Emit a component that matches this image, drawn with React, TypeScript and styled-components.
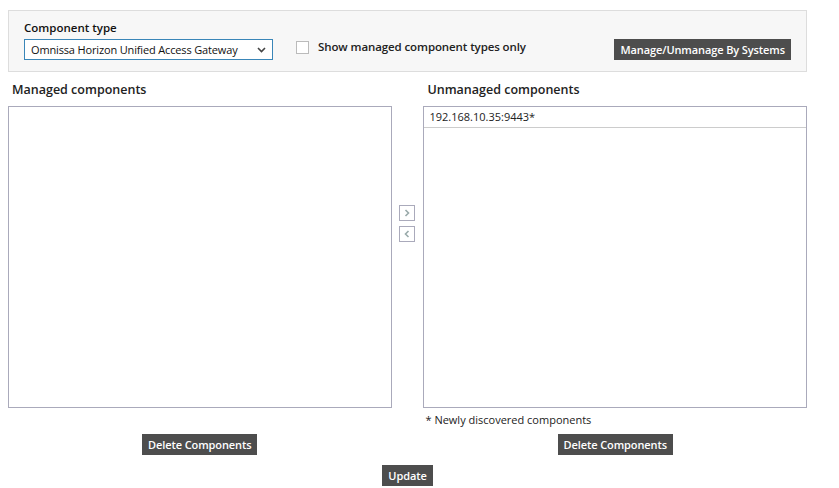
import React from "react";
import styled, { createGlobalStyle } from "styled-components";

const G = createGlobalStyle`
  body { margin: 0; font-family: "Open Sans", "DejaVu Sans", sans-serif; font-size: 12px; color: #222; background: #fff; }
`;
const Page = styled.div`width: 839px; padding: 10px 32px 0 8px; box-sizing: border-box;`;
const TopPanel = styled.div`
  background: #f7f7f7; border: 1px solid #ddd; height: 62px; box-sizing: border-box;
  padding: 8px 15px 0 15px; display: flex; flex-direction: column; gap: 3px;
`;
const Label = styled.div`font-weight: 600; font-size: 11.5px; color: #111; line-height: 17px;`;
const TopRow = styled.div`display: flex; align-items: center;`;
const Select = styled.div`
  width: 249px; height: 21px; box-sizing: border-box; border: 1px solid #3a86b8; background: #fff;
  display: flex; align-items: center; justify-content: space-between; padding: 0 6px 0 6px;
  font-size: 11px; color: #111; letter-spacing: -0.15px;
`;
const Check = styled.span`width: 11px; height: 11px; border: 1px solid #bbb; background: #fff; margin: -4px 9px 0 23px; display:inline-block;`;
const CheckLabel = styled.span`font-weight: 600; font-size: 11.5px; color: #222; margin-top: -6px; letter-spacing: -0.1px;`;
const Btn = styled.button`
  background: #4d4d4d; color: #fff; border: none; font-family: inherit; font-size: 11px; font-weight: 600;
  height: 21px; padding: 0 6px; cursor: pointer; letter-spacing: -0.1px;
`;
const Spacer = styled.div`flex: 1;`;
const Columns = styled.div`display: flex; margin-top: 9px;`;
const Col = styled.div`width: 384px; display: flex; flex-direction: column;`;
const ColTitle = styled.div`font-weight: 600; font-size: 12.5px; color: #222; padding-left: 4px; height: 25px; line-height: 18px;`;
const List = styled.div`height: 302px; border: 1px solid #aab; box-sizing: border-box; background: #fff;`;
const Row = styled.div`height: 20px; border-bottom: 1px solid #ccc; padding-left: 5px; line-height: 19px; font-size: 11px;`;
const Mid = styled.div`width: 32px; display: flex; flex-direction: column; align-items: center; gap: 5px; padding-top: 124px;`;
const Arrow = styled.div`width: 14px; height: 14px; border: 1px solid #aab; display: flex; align-items: center; justify-content: center;`;
const Note = styled.div`font-size: 11px; height: 22px; line-height: 24px; padding-left: 2px;`;
const Center = styled.div<{ $h: number }>`display: flex; justify-content: center; height: ${p => p.$h}px; align-items: flex-start; padding-top: 4px;`;
const Bottom = styled.div`display: flex; justify-content: center; margin-top: 1px;`;

const Chev = ({ d }: { d: string }) => (
  <svg width="8" height="8" viewBox="0 0 8 8"><path d={d} stroke="#9aa" strokeWidth="1.6" fill="none" /></svg>
);

export default function App() {
  return (
    <Page>
      <G />
      <TopPanel>
        <Label>Component type</Label>
        <TopRow>
          <Select>
            <span>Omnissa Horizon Unified Access Gateway</span>
            <svg width="9" height="6" viewBox="0 0 9 6"><path d="M1 1l3.5 3.5L8 1" stroke="#444" strokeWidth="1.6" fill="none" /></svg>
          </Select>
          <Check />
          <CheckLabel>Show managed component types only</CheckLabel>
          <Spacer />
          <Btn>Manage/Unmanage By Systems</Btn>
        </TopRow>
      </TopPanel>
      <Columns>
        <Col>
          <ColTitle>Managed components</ColTitle>
          <List />
          <Note>&nbsp;</Note>
          <Center $h={30}><Btn>Delete Components</Btn></Center>
        </Col>
        <Mid>
          <Arrow><Chev d="M2.5 1l3 3-3 3" /></Arrow>
          <Arrow><Chev d="M5.5 1l-3 3 3 3" /></Arrow>
        </Mid>
        <Col>
          <ColTitle>Unmanaged components</ColTitle>
          <List><Row>192.168.10.35:9443*</Row></List>
          <Note>* Newly discovered components</Note>
          <Center $h={30}><Btn>Delete Components</Btn></Center>
        </Col>
      </Columns>
      <Bottom><Btn>Update</Btn></Bottom>
    </Page>
  );
}
